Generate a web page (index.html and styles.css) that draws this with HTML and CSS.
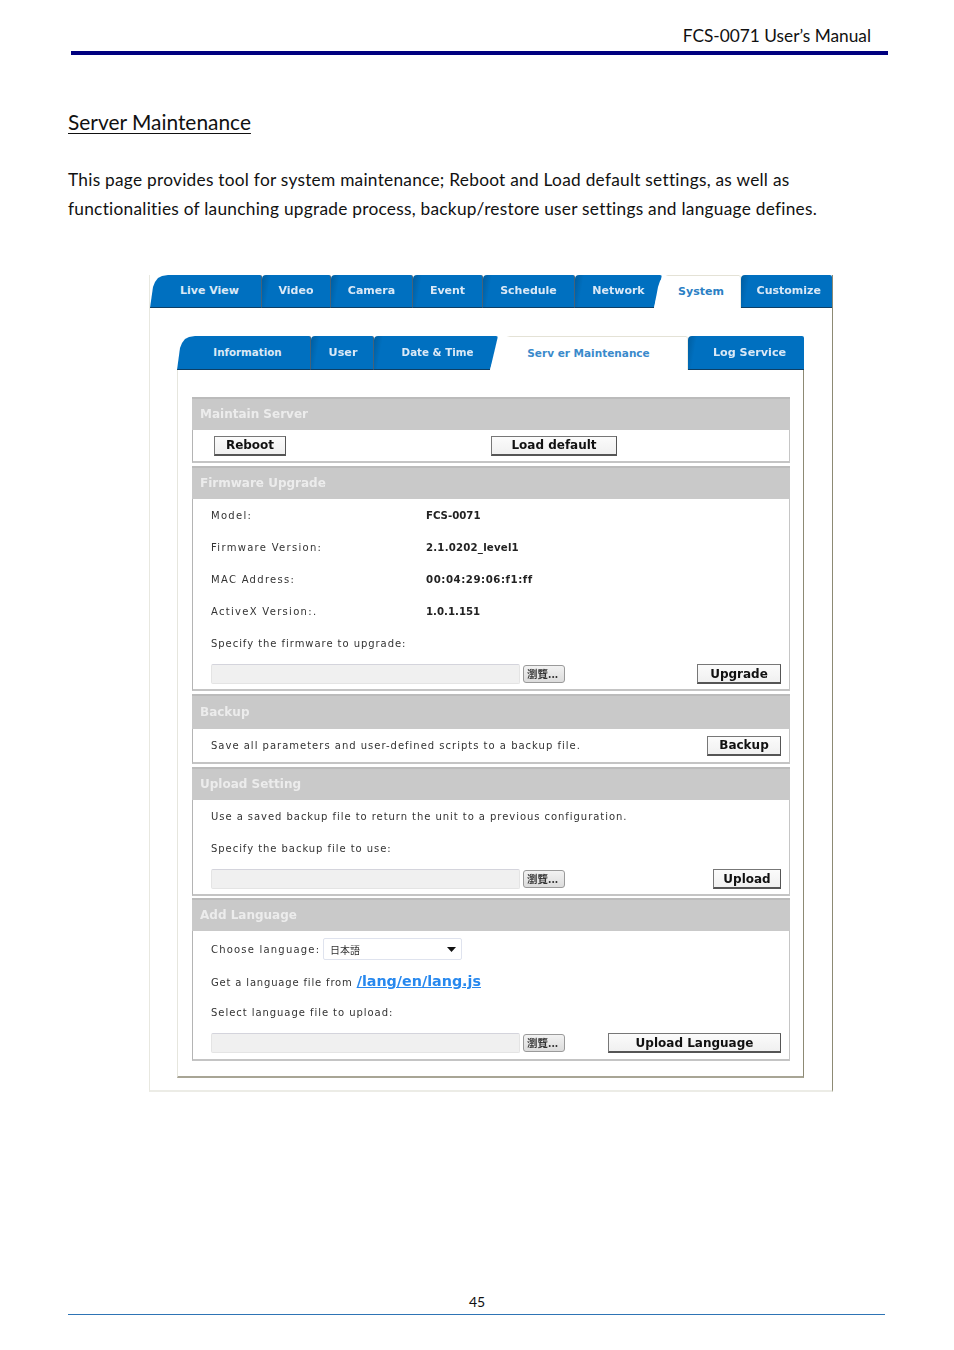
FILE: index.html
```html
<!DOCTYPE html>
<html lang="en">
<head>
<meta charset="utf-8">
<title>FCS-0071 User's Manual</title>
<link rel="stylesheet" href="styles.css">
</head>
<body>
<header class="doc-head">
  <div class="doc-head-text">FCS-0071 User’s Manual</div>
  <div class="doc-head-rule"></div>
</header>
<main class="doc-main">
  <h1 class="doc-title">Server Maintenance</h1>
  <p class="doc-para">This page provides tool for system maintenance; Reboot and Load default settings, as well as<br>functionalities of launching upgrade process, backup/restore user settings and language defines.</p>
</main>
<section class="shot">
  <nav class="tabs top-tabs">
    <div class="tab first t-live">Live View</div>
    <div class="tab t-video">Video</div>
    <div class="tab t-camera">Camera</div>
    <div class="tab t-event">Event</div>
    <div class="tab t-schedule">Schedule</div>
    <div class="tab slant-right t-network">Network</div>
    <div class="tab active t-system">System</div>
    <div class="tab t-customize">Customize</div>
  </nav>
  <div class="outer-body">
    <nav class="tabs sub-tabs">
      <div class="tab first s-info">Information</div>
      <div class="tab s-user">User</div>
      <div class="tab slant-right s-date">Date &amp; Time</div>
      <div class="tab active s-server">Serv er Maintenance</div>
      <div class="tab s-log">Log Service</div>
    </nav>
    <div class="inner-body">
      <div class="panels">
        <h2 class="sec-head h-maintain">Maintain Server</h2>
        <div class="sec-body maintain-row">
          <button class="btn b-reboot">Reboot</button>
          <button class="btn b-load">Load default</button>
        </div>
        <h2 class="sec-head h-firmware">Firmware Upgrade</h2>
        <div class="sec-body">
          <div class="row"><span class="lbl">Model:</span><span class="val">FCS-0071</span></div>
          <div class="row"><span class="lbl">Firmware Version:</span><span class="val val-fw">2.1.0202_level1</span></div>
          <div class="row"><span class="lbl">MAC Address:</span><span class="val val-mac">00:04:29:06:f1:ff</span></div>
          <div class="row"><span class="lbl">ActiveX Version:.</span><span class="val">1.0.1.151</span></div>
          <div class="row">Specify the firmware to upgrade:</div>
          <div class="row file-row">
            <div class="file-input"></div><div class="browse">瀏覽...</div>
            <button class="btn end b-upgrade">Upgrade</button>
          </div>
        </div>
        <h2 class="sec-head h-backup">Backup</h2>
        <div class="sec-body">
          <div class="row backup-row"><span>Save all parameters and user-defined scripts to a backup file.</span>
            <button class="btn end b-backup">Backup</button>
          </div>
        </div>
        <h2 class="sec-head h-upload">Upload Setting</h2>
        <div class="sec-body">
          <div class="row">Use a saved backup file to return the unit to a previous configuration.</div>
          <div class="row">Specify the backup file to use:</div>
          <div class="row file-row">
            <div class="file-input"></div><div class="browse">瀏覽...</div>
            <button class="btn end b-upload">Upload</button>
          </div>
        </div>
        <h2 class="sec-head h-add">Add Language</h2>
        <div class="sec-body last">
          <div class="row lang-row"><span class="lang-lbl">Choose language:</span>
            <div class="select"><span>日本語</span>
              <svg class="arrow" width="9" height="5" viewBox="0 0 9 5"><path d="M0 0h9L4.500 5z"/></svg>
            </div>
          </div>
          <div class="row link-row">Get a language file from <a class="lang-link" href="#">/lang/en/lang.js</a></div>
          <div class="row sel-row">Select language file to upload:</div>
          <div class="row file-row">
            <div class="file-input"></div><div class="browse">瀏覽...</div>
            <button class="btn end b-lang">Upload Language</button>
          </div>
        </div>
      </div>
    </div>
  </div>
</section>
<footer class="doc-foot">
  <div class="page-no">45</div>
  <div class="foot-rule"></div>
</footer>
</body>
</html>
```
FILE: styles.css
```css
* { box-sizing: border-box; }
html, body { margin: 0; padding: 0; background: #fff; }
body { width: 954px; height: 1350px; overflow: hidden; font-family: "Lato", "Liberation Sans", sans-serif; color: #111; }

.doc-head { padding: 25px 0 0 71px; }
.doc-head-text { width: 800px; text-align: right; font-size: 17.3px; line-height: 21px; }
.doc-head-rule { width: 817px; height: 4px; margin-top: 5px; background: #00007f; }

.doc-main { padding: 0 68px; }
.doc-title { margin: 53px 0 0; font-size: 20.9px; line-height: 28px; font-weight: 400; display: inline-block; text-decoration: underline; text-underline-offset: 3px; text-decoration-thickness: 1px; }
.doc-para { margin: 29px 0 0; font-size: 17.3px; line-height: 29px; letter-spacing: .26px; white-space: nowrap; }

.shot { width: 684px; height: 817px; margin: 52px 0 0 149px; font-family: "DejaVu Sans", sans-serif; filter: blur(0.5px);
  border-right: 1.5px solid #8d8a74; border-left: 1px solid #e8e8e0; border-bottom: 2px solid #ecece6; font-variant-ligatures: none; }

.tabs { display: flex; }
.top-tabs { height: 33px; }
.tab { height: 100%; display: flex; align-items: center; justify-content: center; color: #dbe9f6; background: linear-gradient(100deg, #005d9f 0, #0070c0 9px); font-size: 11px; font-weight: 700; border-radius: 4px 2px 0 0; border-bottom: 1px solid #0d3f66; border-right: 1px solid #44627a; padding-bottom: 1px; }
.tab.first { background: #0070c0; clip-path: polygon(0 100%, 3px 12px, 5px 7px, 8px 3px, 12px 1px, 18px 0, 100% 0, 100% 100%); padding-left: 8px; }
.tab.slant-right { clip-path: polygon(0 0, 100% 0, calc(100% - 8px) 100%, 0 100%); border-right: 0; }
.tab.active { background: #fff; color: #2b80c4; border-bottom: 0; border-right: 1px solid #eeeee6; box-shadow: inset 0 1px 0 #e4e2d6; }

.t-live { width: 112px; }
.t-video { width: 69px; }
.t-camera { width: 82px; }
.t-event { width: 70px; }
.t-schedule { width: 92px; }
.t-network { width: 87px; margin-right: -8px; }
.t-system { width: 87px; padding-left: 8px; clip-path: polygon(0 100%, 4px 12px, 6px 6px, 9px 2px, 14px 0, 100% 0, 100% 100%); }
.t-customize { width: 90.5px; padding-left: 5px; border-right: 0; }

.outer-body { padding: 28px 0 0 27px; }
.sub-tabs { height: 34px; }
.sub-tabs .tab { font-size: 11.2px; }
.sub-tabs .s-info, .sub-tabs .s-date { font-size: 10.3px; }
.sub-tabs .s-server { font-size: 10.5px; }
.s-info { width: 134px; padding-left: 8px; }
.s-user { width: 63px; padding-left: 2px; }
.s-date { width: 124px; margin-right: -8px; padding-left: 3px; }
.s-server { width: 198px; clip-path: polygon(0 100%, 6px 14px, 9px 6px, 13px 2px, 20px 0, 100% 0, 100% 100%); }
.s-server.active { color: #3a8acb; }
.s-log { width: 116px; padding-left: 7px; border-right: 0; }

.inner-body { width: 627px; height: 708px; padding: 27px 14px 0 14px; border-right: 1.5px solid #8d8a74; border-bottom: 2px solid #a8a595; border-left: 1px solid #e6e6de; }
.panels { width: 598px; height: 663px; }

.sec-head { margin: 0; padding: 0 0 2px 8px; display: flex; align-items: center; background: #c9c9c9; color: #ececec; font-size: 12px; font-weight: 700; height: 33px; border-top: 2px solid #bbb; }
.h-firmware { margin-top: 3px; }
.h-backup { margin-top: 3px; height: 35px; }
.h-upload { margin-top: 3px; }
.h-add { margin-top: 2px; }

.sec-body { background: #fff; border-left: 1.5px solid #b4b4b4; border-right: 1.5px solid #c6c6c6; border-bottom: 2px solid #c4c4c4; color: #333; font-size: 10px; padding-left: 18px; padding-right: 8px; }
.sec-body.last { padding-bottom: 1px; }
.maintain-row { height: 33px; display: flex; align-items: center; padding-left: 21px; padding-right: 0; }
.b-reboot { width: 72px; }
.b-load { width: 126px; margin-left: 205px; }

.row { height: 32px; display: flex; align-items: center; white-space: nowrap; letter-spacing: .95px; }
.lbl { width: 215px; flex: none; letter-spacing: 1.3px; }
.val { font-weight: 700; color: #222; letter-spacing: 0; font-size: 10.2px; }
.val-fw { letter-spacing: .2px; }
.val-mac { letter-spacing: .55px; }

.btn { height: 20px; padding: 0; font-family: "DejaVu Sans", sans-serif; font-size: 12px; font-weight: 700; color: #111; background: linear-gradient(#fbfbfb, #f0f0f0); border: 1px solid #777; border-right-color: #555; border-bottom: 2px solid #555; }
.end { margin-left: auto; }
.b-upgrade { width: 84px; }
.b-backup { width: 74px; }
.b-upload { width: 68px; }
.b-lang { width: 173px; }

.file-row { height: 30px; letter-spacing: 0; }
.file-input { width: 309px; height: 20px; background: #f0f0f0; border: 1px solid #e4e4e4; border-top-color: #d4d4dc; border-radius: 2px; }
.browse { width: 42px; height: 18px; margin-left: 3px; padding: 0 0 1px 3px; display: flex; align-items: center; font-family: "Noto Sans CJK TC", sans-serif; font-size: 10.5px; font-weight: 700; background: linear-gradient(#f2f2f2, #dcdcdc); border: 1px solid #9a9a9a; border-radius: 3px; color: #333; }

.backup-row { height: 33px; letter-spacing: 1px; }
.lang-row { height: 36px; }
.lang-lbl { width: 112px; flex: none; letter-spacing: 1.2px; }
.link-row { height: 28px; display: block; line-height: 28px; letter-spacing: .83px; }
.sel-row { height: 33px; padding-top: 2px; }
.select { width: 139px; height: 22px; padding: 0 5px 0 6px; display: flex; align-items: center; justify-content: space-between; border: 1px solid #dfe3ee; border-radius: 2px; background: #fff; font-family: "Noto Sans CJK JP", sans-serif; font-size: 10px; letter-spacing: 0; }
.arrow { fill: #111; }
.lang-link { color: #2788ee; font-size: 14.3px; font-weight: 700; letter-spacing: 0; text-decoration: underline; }

.doc-foot { padding: 0 69px 0 68px; margin-top: 201px; }
.page-no { text-align: center; font-size: 14px; line-height: 18px; padding-left: 1px; }
.foot-rule { height: 1px; margin-top: 3px; background: #2e74b5; }
```
